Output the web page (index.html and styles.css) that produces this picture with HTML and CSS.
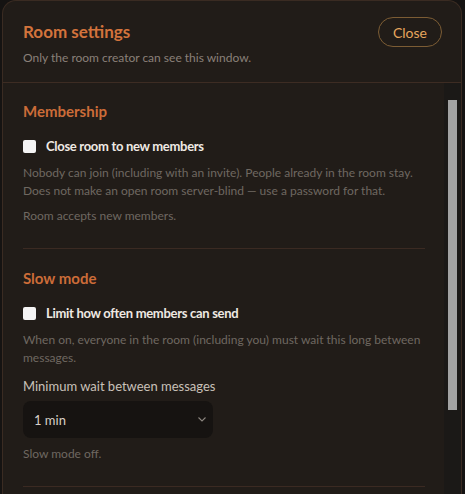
FILE: index.html
```html
<!DOCTYPE html>
<html lang="en">
<head>
<meta charset="utf-8">
<title>Room settings</title>
<link rel="stylesheet" href="styles.css">
</head>
<body>
<div class="modal">
  <header class="modal-head">
    <div class="head-row">
      <h1 class="title">Room settings</h1>
      <button class="close-btn" type="button">Close</button>
    </div>
    <p class="subtitle">Only the room creator can see this window.</p>
  </header>
  <div class="body-row">
    <div class="content">
      <section class="section">
        <h2 class="sec-title">Membership</h2>
        <label class="check-row"><input type="checkbox" class="check"><span>Close room to new members</span></label>
        <p class="help">Nobody can join (including with an invite). People already in the room stay. Does not make an open room server-blind — use a password for that.</p>
        <p class="status">Room accepts new members.</p>
      </section>
      <section class="section section-slow">
        <h2 class="sec-title">Slow mode</h2>
        <label class="check-row"><input type="checkbox" class="check"><span>Limit how often members can send</span></label>
        <p class="help">When on, everyone in the room (including you) must wait this long between messages.</p>
        <p class="field-label">Minimum wait between messages</p>
        <div class="select">
          <span>1 min</span>
          <svg class="chev" width="8" height="5" viewBox="0 0 8 5"><path d="M0.5 0.5 L4 4 L7.5 0.5" fill="none" stroke="#8a847e" stroke-width="1.1"/></svg>
        </div>
        <p class="status status-after">Slow mode off.</p>
      </section>
    </div>
    <div class="scrollbar" aria-hidden="true">
      <div class="thumb"></div>
    </div>
  </div>
</div>
</body>
</html>
```
FILE: styles.css
```css
html, body {
  margin: 0;
  padding: 0;
  background: #151312;
  height: 100%;
  overflow: hidden;
}
body {
  font-family: "Lato", "Noto Sans", sans-serif;
  color: #d8d0c8;
}
.modal {
  margin: 0 3px 0 2px;
  height: 540px;
  background: #211c18;
  border: 1px solid #3a2b22;
  border-bottom: none;
  border-radius: 14px 14px 0 0;
  overflow: hidden;
  display: flex;
  flex-direction: column;
}
.modal-head {
  padding: 16px 19px 0 20px;
  border-bottom: 1px solid #3d2c23;
  height: 65px;
  flex: none;
}
.head-row {
  display: flex;
  align-items: center;
  justify-content: space-between;
}
.title {
  margin: 0;
  font-size: 17px;
  line-height: 30px;
  font-weight: 700;
  color: #d3733c;
}
.close-btn {
  width: 64px;
  height: 30px;
  border: 1px solid #7c5c34;
  border-radius: 15px;
  background: transparent;
  color: #e6a65e;
  font-family: "Lato", sans-serif;
  font-size: 14px;
  padding: 0;
}
.subtitle {
  margin: 2px 0 0;
  font-size: 12px;
  line-height: 17px;
  color: #8a8078;
}
.body-row {
  flex: 1;
  display: flex;
  min-height: 0;
}
.content {
  flex: 1;
  padding: 0 19px 0 20px;
  overflow: hidden;
}
.scrollbar {
  width: 17px;
  flex: none;
  background: #1b1917;
  padding-top: 17px;
  box-sizing: border-box;
  display: flex;
  justify-content: center;
}
.thumb {
  width: 9px;
  height: 310px;
  background: #a3a3a3;
}
.section {
  padding: 18px 0 24px;
  border-bottom: 1px solid #3b2a22;
}
.section + .section {
  padding-top: 19px;
}
.sec-title {
  margin: 0;
  font-size: 15px;
  line-height: 20px;
  font-weight: 700;
  color: #cc6c38;
}
.check-row {
  display: flex;
  align-items: center;
  gap: 10px;
  margin-top: 15px;
  height: 20px;
  font-size: 13px;
  font-weight: 700;
  letter-spacing: -0.3px;
  color: #efe9e3;
}
.check {
  appearance: none;
  -webkit-appearance: none;
  margin: 0;
  width: 13px;
  height: 13px;
  background: #f4f4f4;
  border-radius: 2px;
  flex: none;
}
.help {
  margin: 8px 0 0;
  font-size: 12px;
  line-height: 17.5px;
  color: #6f6861;
}
.section-slow .help {
  line-height: 18px;
}
.status {
  margin: 8px 0 0;
  font-size: 12px;
  line-height: 17px;
  color: #6f6861;
}
.status-after {
  margin-top: 7px;
}
.field-label {
  margin: 10px 0 0;
  font-size: 13px;
  line-height: 18px;
  color: #c9c1b9;
}
.select {
  margin-top: 6px;
  width: 190px;
  height: 37px;
  box-sizing: border-box;
  background: #161311;
  border-radius: 8px;
  display: flex;
  align-items: center;
  justify-content: space-between;
  padding: 0 7px 0 11px;
  font-size: 13px;
  color: #d8d0c8;
}
.chev {
  display: block;
}
```
